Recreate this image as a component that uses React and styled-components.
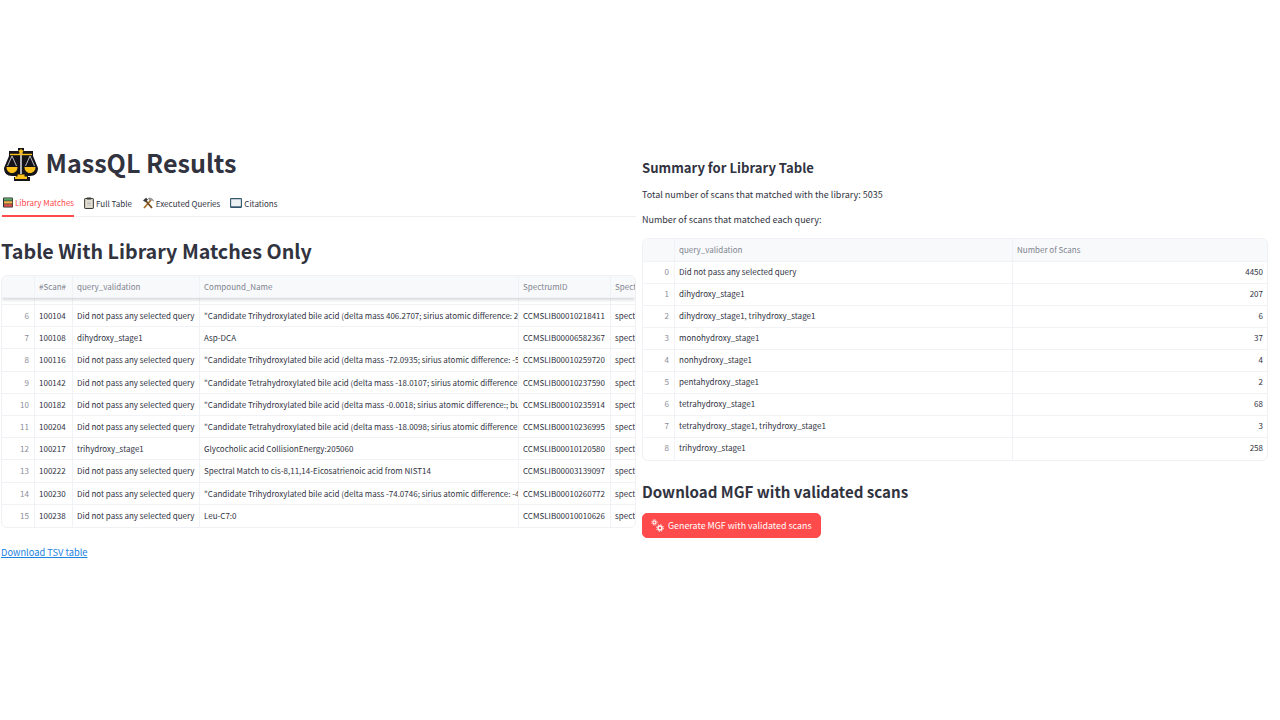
import React from 'react'
import styled, { createGlobalStyle } from 'styled-components'

const GlobalStyle = createGlobalStyle`
  html, body {
    margin: 0;
    padding: 0;
    background: #fff;
  }
  body {
    font-family: "Noto Sans CJK JP", "Noto Sans", sans-serif;
    color: #31333f;
  }
`

const Page = styled.div`
  display: flex;
  gap: 6px;
  width: 1280px;
  height: 720px;
  padding: 145px 0 0 1px;
  box-sizing: border-box;
  overflow: hidden;
`

const LeftColumn = styled.div`
  width: 635px;
  flex: none;
`

const RightColumn = styled.div`
  width: 626px;
  flex: none;
`

const TitleRow = styled.div`
  display: flex;
  align-items: center;
  gap: 8px;
  height: 37px;
  padding-left: 3px;
`

const Title = styled.h1`
  margin: 0 0 2px -0.5px;
  font-size: 25.1px;
  font-weight: 700;
  line-height: 35px;
`

const Tabs = styled.div`
  display: flex;
  gap: 10px;
  height: 35px;
  padding-left: 1px;
  box-sizing: border-box;
  border-bottom: 1px solid #eeeff2;
`

const Tab = styled.div`
  display: flex;
  align-items: center;
  gap: 2px;
  height: 35px;
  box-sizing: border-box;
  padding: ${p => (p.$active ? '8px 0 0 1px' : '7px 0 0 0')};
  font-size: 8px;
  color: ${p => (p.$active ? '#ff4b4b' : '#31333f')};
  border-bottom: ${p => (p.$active ? '2px solid #ff4b4b' : 'none')};
`

const Heading = styled.h2`
  margin: 0;
  font-size: ${p => p.$size}px;
  font-weight: 600;
  line-height: ${p => p.$height}px;
  margin-top: ${p => p.$top}px;
`

const Text = styled.p`
  margin: 0;
  font-size: 9px;
  line-height: 14px;
  margin-top: ${p => p.$top}px;
`

const TableFrame = styled.div`
  margin-top: ${p => p.$top}px;
  border: 1px solid #f0f1f4;
  border-radius: 6px;
  overflow: hidden;
  box-sizing: border-box;
  width: 100%;
`

const Row = styled.div`
  display: grid;
  grid-template-columns: ${p => p.$columns};
  height: ${p => p.$height}px;
  border-bottom: 1px solid #f1f2f5;
  box-sizing: border-box;
  &:last-child {
    border-bottom: none;
  }
`

const HeaderRow = styled(Row)`
  background: #f8f9fb;
  color: #80848f;
  box-shadow: ${p => (p.$shadow ? '0 2px 3px rgba(60, 65, 80, 0.2)' : 'none')};
  position: relative;
`

const Spacer = styled(Row)`
  background: #fff;
`

const Cell = styled.div`
  overflow: hidden;
  white-space: nowrap;
  padding: ${p => (p.$right ? '0 5px 0 0' : '0 0 0 4px')};
  font-size: 8px;
  line-height: ${p => p.$line}px;
  border-right: 1px solid #f1f2f5;
  text-align: ${p => (p.$right ? 'right' : 'left')};
  color: ${p => (p.$index ? '#8b8e99' : 'inherit')};
  &:last-child {
    border-right: none;
  }
`

const DownloadLink = styled.a`
  display: block;
  margin-top: 17px;
  font-size: 9.3px;
  line-height: 14px;
  color: #1c83e1;
  text-decoration: underline;
`

const Button = styled.button`
  display: flex;
  align-items: center;
  gap: 4px;
  width: 179px;
  height: 25px;
  margin-top: 10px;
  padding: 0 0 0 8px;
  box-sizing: border-box;
  background: #ff4b4b;
  color: #fff;
  border: 1px solid #ff4b4b;
  border-radius: 5px;
  font-family: inherit;
  font-size: 8.9px;
  white-space: nowrap;
`

const Scales = () => (
  <svg width="34" height="34" viewBox="0 0 34 34">
    <path d="M14 1h6v3h9v5l5 12c0 5-3 8-8 8h-2v1h2v4H10v-4h2v-1h-4c-5 0-8-3-8-8L5 9V4h9z" fill="#14141a" />
    <path d="M16.200 5h1.600v22h-1.600z" fill="#d8d8de" />
    <path d="M17 1.500l1 1.800 2 .3-1.500 1.300.4 2L17 6l-1.900 1 .4-2L14 3.600l2-.3z" fill="#fcc21b" />
    <path d="M2.500 20h11c0 3.600-2.300 6-5.500 6s-5.500-2.400-5.500-6zM20.500 20h11c0 3.600-2.300 6-5.500 6s-5.500-2.400-5.500-6z" fill="#fcc21b" />
    <path d="M13.500 27.500h7v2h2.500v2.500H11v-2.500h2.500z" fill="#fcc21b" />
    <path d="M3.500 19l4.500-10 4.500 10M21.500 19l4.500-10 4.500 10" fill="none" stroke="#c9c9d0" strokeWidth="0.900" />
    <path d="M6 7.500h22" stroke="#fcc21b" strokeWidth="1.400" />
  </svg>
)

const BooksIcon = () => (
  <svg width="10" height="11" viewBox="0 0 10 11">
    <rect x="0" y="0.500" width="10" height="10" rx="1" fill="#2e2e2e" />
    <rect x="1" y="1.200" width="8.300" height="2.400" fill="#5aa469" />
    <rect x="1" y="4.200" width="8.300" height="2.400" fill="#f0b24a" />
    <rect x="1" y="7.200" width="8.300" height="2.500" fill="#d9534f" />
  </svg>
)

const ClipboardIcon = () => (
  <svg width="10" height="12" viewBox="0 0 10 12">
    <rect x="0.600" y="1.500" width="8.800" height="10" rx="0.600" fill="#d9d3c3" stroke="#3a3a3a" />
    <rect x="2.500" y="3.600" width="5" height="6" fill="#f5f2ea" />
    <path d="M3 5h4M3 6.600h4M3 8.200h4" stroke="#8a8a8a" strokeWidth="0.600" />
    <rect x="2.900" y="0.500" width="4.200" height="2" fill="#3a3a3a" />
  </svg>
)

const ToolsIcon = () => (
  <svg width="12" height="12" viewBox="0 0 12 12">
    <path d="M2 11l7-8" stroke="#a9702c" strokeWidth="1.800" />
    <path d="M10 11L3.500 3.500" stroke="#6e4a20" strokeWidth="1.800" />
    <path d="M1 3.500L4 .8l2 1.600-2.400 2.800z" fill="#3b3b3b" />
    <path d="M6.500 1.200C8.500.6 10.600 1.500 11.600 4 10.200 2.900 8.800 2.600 7.500 3z" fill="#a4adb5" stroke="#444" strokeWidth="0.400" />
  </svg>
)

const NotebookIcon = () => (
  <svg width="12" height="10" viewBox="0 0 12 10">
    <rect x="0.600" y="0.600" width="10.800" height="8.800" rx="0.500" fill="#eef1f4" stroke="#33566b" strokeWidth="1.100" />
    <path d="M1 9h10" stroke="#33566b" strokeWidth="1.200" />
  </svg>
)

const GearsIcon = () => (
  <svg width="13" height="13" viewBox="0 0 13 13" fill="none" stroke="#fff">
    <circle cx="3.400" cy="3.400" r="1.500" strokeWidth="1.100" />
    <circle cx="3.400" cy="3.400" r="2.700" strokeWidth="0.900" strokeDasharray="1.050 1.070" />
    <circle cx="9" cy="9" r="2" strokeWidth="1.400" />
    <circle cx="9" cy="9" r="3.400" strokeWidth="1" strokeDasharray="1.300 1.370" />
  </svg>
)

const NOPASS = 'Did not pass any selected query'
const LIBRARY_COLUMNS = '33px 38px 127px 319px 92px 100px'
const LIBRARY_ROWS = [
  [6, 100104, NOPASS, '"Candidate Trihydroxylated bile acid (delta mass 406.2707; sirius atomic difference: 2', 'CCMSLIB00010218411'],
  [7, 100108, 'dihydroxy_stage1', 'Asp-DCA', 'CCMSLIB00006582367'],
  [8, 100116, NOPASS, '"Candidate Trihydroxylated bile acid (delta mass -72.0935; sirius atomic difference: -5', 'CCMSLIB00010259720'],
  [9, 100142, NOPASS, '"Candidate Tetrahydroxylated bile acid (delta mass -18.0107; sirius atomic difference', 'CCMSLIB00010237590'],
  [10, 100182, NOPASS, '"Candidate Trihydroxylated bile acid (delta mass -0.0018; sirius atomic difference:; bu', 'CCMSLIB00010235914'],
  [11, 100204, NOPASS, '"Candidate Tetrahydroxylated bile acid (delta mass -18.0098; sirius atomic difference', 'CCMSLIB00010236995'],
  [12, 100217, 'trihydroxy_stage1', 'Glycocholic acid CollisionEnergy:205060', 'CCMSLIB00010120580'],
  [13, 100222, NOPASS, 'Spectral Match to cis-8,11,14-Eicosatrienoic acid from NIST14', 'CCMSLIB00003139097'],
  [14, 100230, NOPASS, '"Candidate Trihydroxylated bile acid (delta mass -74.0746; sirius atomic difference: -4', 'CCMSLIB00010260772'],
  [15, 100238, NOPASS, 'Leu-C7:0', 'CCMSLIB00010010626'],
]

const SUMMARY_COLUMNS = '32px 338px 255px'
const SUMMARY_ROWS = [
  [0, NOPASS, 4450],
  [1, 'dihydroxy_stage1', 207],
  [2, 'dihydroxy_stage1, trihydroxy_stage1', 6],
  [3, 'monohydroxy_stage1', 37],
  [4, 'nonhydroxy_stage1', 4],
  [5, 'pentahydroxy_stage1', 2],
  [6, 'tetrahydroxy_stage1', 68],
  [7, 'tetrahydroxy_stage1, trihydroxy_stage1', 3],
  [8, 'trihydroxy_stage1', 258],
]

export default function App() {
  return (
    <Page>
      <GlobalStyle />
      <LeftColumn>
        <TitleRow>
          <Scales />
          <Title>MassQL Results</Title>
        </TitleRow>
        <Tabs>
          <Tab $active><BooksIcon />Library Matches</Tab>
          <Tab><ClipboardIcon />Full Table</Tab>
          <Tab><ToolsIcon />Executed Queries</Tab>
          <Tab><NotebookIcon />Citations</Tab>
        </Tabs>
        <Heading $size={19.7} $height={30} $top={19}>Table With Library Matches Only</Heading>
        <TableFrame $top={9}>
          <HeaderRow $columns={LIBRARY_COLUMNS} $height={22} $shadow>
            <Cell $line={22} />
            <Cell $line={22}>#Scan#</Cell>
            <Cell $line={22}>query_validation</Cell>
            <Cell $line={22}>Compound_Name</Cell>
            <Cell $line={22}>SpectrumID</Cell>
            <Cell $line={22}>Spectrum</Cell>
          </HeaderRow>
          <Spacer $columns={LIBRARY_COLUMNS} $height={7}>
            <Cell /><Cell /><Cell /><Cell /><Cell /><Cell />
          </Spacer>
          {LIBRARY_ROWS.map(r => (
            <Row key={r[0]} $columns={LIBRARY_COLUMNS} $height={22.2}>
              <Cell $line={22} $index $right>{r[0]}</Cell>
              <Cell $line={22}>{r[1]}</Cell>
              <Cell $line={22}>{r[2]}</Cell>
              <Cell $line={22}>{r[3]}</Cell>
              <Cell $line={22}>{r[4]}</Cell>
              <Cell $line={22}>spectrum</Cell>
            </Row>
          ))}
        </TableFrame>
        <DownloadLink href="#">Download TSV table</DownloadLink>
      </LeftColumn>
      <RightColumn>
        <Heading $size={13.1} $height={20} $top={13}>Summary for Library Table</Heading>
        <Text $top={10}>Total number of scans that matched with the library: 5035</Text>
        <Text $top={11}>Number of scans that matched each query:</Text>
        <TableFrame $top={11}>
          <HeaderRow $columns={SUMMARY_COLUMNS} $height={23}>
            <Cell $line={22} />
            <Cell $line={22}>query_validation</Cell>
            <Cell $line={22}>Number of Scans</Cell>
          </HeaderRow>
          {SUMMARY_ROWS.map(r => (
            <Row key={r[0]} $columns={SUMMARY_COLUMNS} $height={22}>
              <Cell $line={20} $index $right>{r[0]}</Cell>
              <Cell $line={20}>{r[1]}</Cell>
              <Cell $line={20} $right>{r[2]}</Cell>
            </Row>
          ))}
        </TableFrame>
        <Heading $size={15.1} $height={24} $top={18}>Download MGF with validated scans</Heading>
        <Button><GearsIcon />Generate MGF with validated scans</Button>
      </RightColumn>
    </Page>
  )
}
